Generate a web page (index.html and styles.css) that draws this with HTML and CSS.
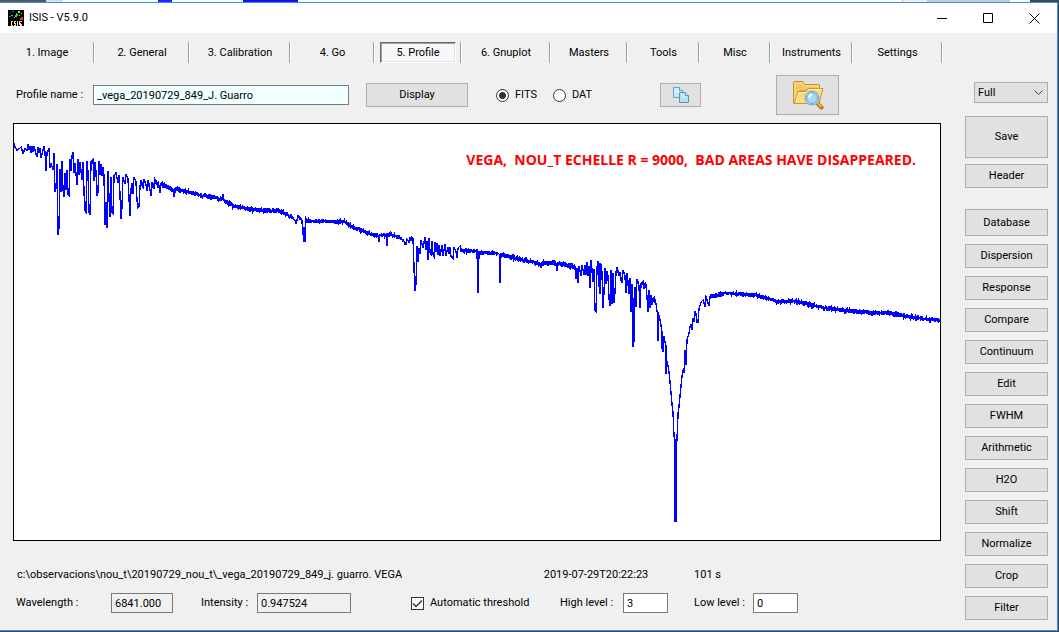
FILE: index.html
```html
<!DOCTYPE html>
<html lang="en">
<head>
    <meta charset="UTF-8">
    <meta name="viewport" content="width=device-width, initial-scale=1.0">
    <title>ISIS - V5.9.0</title>
    <link rel="stylesheet" href="styles.css">
</head>
<body>
    <div class="behind"></div>

    <div class="window">

        <header class="titlebar">
            <svg class="app-icon" viewBox="0 0 16 16" shape-rendering="crispEdges">
                <rect width="16" height="16" fill="#000"/>
                <path d="M2 2h1v1h-1zM4 1h2v1h-2zM1 6h2v1h-2z" fill="#2a62d8"/>
                <path d="M3 5h2v1h-2zM6 7h1v1h-1z" fill="#2fb6c8"/>
                <path d="M8 3h1v1h1v2h-1v1h-2v-2h1z" fill="#1fe05a"/>
                <path d="M10 1h2v2h-2z" fill="#b6e32a"/>
                <path d="M13 3h1v1h-1zM11 5h1v1h-1z" fill="#f4c430"/>
                <path d="M13 7h2v3h-3v-2h1z" fill="#f03018"/>
                <path d="M3 11h2v1h-1v3h1v1h-2v-1h0v-3h0zM6 11h2v1h-1v1h1v3h-2v-1h1v-1h-1zM9 11h1v5h-1zM11 11h3v1h-2v1h1v1h1v2h-2v-1h-1z" fill="#e8dca0"/>
            </svg>
            <span class="title">ISIS - V5.9.0</span>
            <button class="win-btn" aria-label="Minimize"><svg viewBox="0 0 11 11"><path d="M0 5.5h10"/></svg></button>
            <button class="win-btn" aria-label="Maximize"><svg viewBox="0 0 11 11"><path d="M.5.5h9v9h-9z"/></svg></button>
            <button class="win-btn" aria-label="Close"><svg viewBox="0 0 11 11"><path d="M.5.5l10 10M10.500.5l-10 10"/></svg></button>
        </header>

        <nav class="tabs">
            <div><button>1. Image</button></div>
            <div><button>2. General</button></div>
            <div><button>3. Calibration</button></div>
            <div><button>4. Go</button></div>
            <div><button class="active">5. Profile</button></div>
            <div><button>6. Gnuplot</button></div>
            <div><button>Masters</button></div>
            <div><button>Tools</button></div>
            <div><button>Misc</button></div>
            <div><button>Instruments</button></div>
            <div><button>Settings</button></div>
        </nav>

        <main class="content">
            <section class="profile">

                <div class="controls">
                    <label for="name">Profile name :</label>
                    <input type="text" id="name" class="name" value="_vega_20190729_849_J. Guarro">
                    <button class="btn display">Display</button>
                    <div class="format">
                        <label><input type="radio" name="format" checked>FITS</label>
                        <label><input type="radio" name="format">DAT</label>
                    </div>
                    <button class="btn copy" aria-label="Copy">
                        <svg width="16" height="16" viewBox="0 0 16 16">
                            <path d="M.5.5h6l3 3v7h-9z" fill="#c9e7f6" stroke="#62a5c7"/>
                            <path d="M6.500.5v3h3" fill="#fff" stroke="#62a5c7"/>
                            <path d="M2 3h3M2 5h5" stroke="#e9f7fd"/>
                            <path d="M6.500 5.500h6l3 3v7h-9z" fill="#b5def2" stroke="#4f98bd"/>
                            <path d="M12.500 5.500v3h3" fill="#fff" stroke="#4f98bd"/>
                            <path d="M8 8h3M8 10h5" stroke="#e3f5fd"/>
                        </svg>
                    </button>
                    <button class="btn browse" aria-label="Browse">
                        <svg width="32" height="32" viewBox="0 0 32 32">
                            <path d="M1.500 24V3.500q0-1 1-1h8l2 3h14q1 0 1 1V12H8L4 24z" fill="#f3c95d" stroke="#c98a2b"/>
                            <path d="M3 22V4h7l2 3h14v3" fill="none" stroke="#fbe39a"/>
                            <path d="M2 24.500L6 12.500h8l2-3h15l-4 15z" fill="#fbdc7c" stroke="#d2922d"/>
                            <path d="M4 23l3-9.500h8l2-3h12" fill="none" stroke="#fff0b8"/>
                            <path d="M25 24l4.500 4.500" stroke="#b5701c" stroke-width="4" stroke-linecap="round"/>
                            <path d="M26 24.500l3 3" stroke="#f8b244" stroke-width="2" stroke-linecap="round"/>
                            <circle cx="20" cy="19" r="6.500" fill="#a9daf8" stroke="#f4f8fb" stroke-width="2"/>
                            <circle cx="20" cy="19" r="7" fill="none" stroke="#6f8ea8"/>
                            <circle cx="20" cy="19" r="5.500" fill="none" stroke="#5d9fd3"/>
                            <path d="M17 19q0-3 3-3.500" fill="none" stroke="#fff" stroke-width="2"/>
                        </svg>
                    </button>
                </div>

                <div class="plot">
                    <svg viewBox="14 124 926 416" preserveAspectRatio="none">
                        <polyline id="spectrum" points=""/>
                    </svg>
                    <p class="caption">VEGA,  NOU_T ECHELLE R = 9000,  BAD AREAS HAVE DISAPPEARED.</p>
                </div>

                <div class="file-info">
                    <span>c:\observacions\nou_t\20190729_nou_t\_vega_20190729_849_j. guarro. VEGA</span>
                    <span>2019-07-29T20:22:23</span>
                    <span>101 s</span>
                </div>

                <div class="readout">
                    <label for="wavelength">Wavelength :</label>
                    <input type="text" id="wavelength" class="w-medium" value="6841.000" readonly>
                    <label for="intensity">Intensity :</label>
                    <input type="text" id="intensity" class="w-large" value="0.947524" readonly>
                    <label class="check"><input type="checkbox" checked>Automatic threshold</label>
                    <label for="high">High level :</label>
                    <input type="text" id="high" class="w-small" value="3">
                    <label for="low">Low level :</label>
                    <input type="text" id="low" class="w-small" value="0">
                </div>

            </section>

            <aside class="actions">
                <select aria-label="Zoom">
                    <option>Full</option>
                </select>
                <button class="btn save">Save</button>
                <button class="btn header">Header</button>
                <button class="btn database">Database</button>
                <button class="btn">Dispersion</button>
                <button class="btn">Response</button>
                <button class="btn">Compare</button>
                <button class="btn">Continuum</button>
                <button class="btn">Edit</button>
                <button class="btn">FWHM</button>
                <button class="btn">Arithmetic</button>
                <button class="btn">H2O</button>
                <button class="btn">Shift</button>
                <button class="btn">Normalize</button>
                <button class="btn">Crop</button>
                <button class="btn">Filter</button>
            </aside>
        </main>

    </div>

    <script src="script.js"></script>
</body>
</html>
```
FILE: styles.css
```css
* {
    box-sizing: border-box;
}

body {
    margin: 0;
    min-height: 100vh;
    display: flex;
    flex-direction: column;
    padding: 0 1px 1px 0;
    background-color: #454545;
    font-family: Roboto, "Liberation Sans", sans-serif;
    font-size: 11px;
    line-height: 16px;
    color: #000;
}

button,
input,
select {
    font: inherit;
    color: inherit;
    margin: 0;
}

button {
    padding: 0;
}

/* sliver of the window underneath */
.behind {
    height: 2px;
    background: linear-gradient(90deg, #555 0 46px, #ddd 46px 63px, #fff 63px 158px, #22f 158px 172px, #fff 172px 243px, #11e 243px 298px, #fff 298px 902px, #f0c040 902px 903px, #eee 903px 927px, #ccc 927px 1010px, #fff 1010px 1030px, #454545 1030px);
}

.window {
    flex: 1;
    display: flex;
    flex-direction: column;
    border: 1px solid #3390ee;
    border-left: 0;
    background-color: #f0f0f0;
}

.titlebar {
    height: 30px;
    display: flex;
    align-items: center;
    padding-left: 8px;
    background-color: #fff;
}

.app-icon {
    width: 16px;
    height: 16px;
}

.title {
    flex: 1;
    margin-left: 5px;
}

.win-btn {
    width: 46px;
    height: 28px;
    border: 0;
    background: none;
}

.win-btn svg {
    display: block;
    width: 11px;
    height: 11px;
    margin: 0 auto;
    fill: none;
    stroke: #000;
}

.tabs {
    display: grid;
    grid-template-columns: 95fr 95fr 101fr 84fr 87fr 89fr 77fr 72fr 71fr 82fr 90fr;
    padding: 9px 114px 0 0;
}

.tabs div {
    display: flex;
    justify-content: center;
    min-width: 0;
    height: 21px;
    border-right: 1px solid #fff;
    box-shadow: inset -1px 0 #a0a0a0;
}

.tabs button {
    border: 0;
    background: none;
    white-space: nowrap;
}

.tabs .active {
    width: 76px;
    border: 1px solid;
    border-color: #696969 #fff #fff #696969;
    box-shadow: inset 1px 1px #a0a0a0, inset -1px -1px #e3e3e3;
    background-color: #f8f8f8;
}

.content {
    flex: 1;
    display: grid;
    grid-template-columns: 1fr 83px;
    column-gap: 24px;
    padding: 12px 9px 10px 13px;
}

.profile {
    display: flex;
    flex-direction: column;
}

.controls {
    display: grid;
    grid-template-columns: 80fr 273fr 130fr 164fr 116fr 165fr;
    align-items: center;
    height: 40px;
    margin-bottom: 8px;
}

.controls > label,
.readout > label:first-child {
    padding-left: 3px;
}

input[type="text"] {
    height: 20px;
    padding: 0 3px;
    border: 1px solid #7a7a7a;
    border-radius: 0;
    background-color: #fff;
}

input[type="text"]:read-only {
    background-color: #f0f0f0;
}

input.name {
    width: 256px;
    background-color: #f0ffff;
}

.btn {
    height: 24px;
    border: 1px solid #adadad;
    background-color: #e1e1e1;
}

.btn:hover {
    border-color: #0078d7;
    background-color: #e5f1fb;
}

.btn svg {
    display: block;
    margin: 0 auto;
}

.display {
    width: 102px;
}

.copy {
    width: 41px;
}

.browse {
    width: 63px;
    height: 40px;
}

.format {
    display: flex;
    gap: 16px;
}

.format label,
.check {
    display: flex;
    align-items: center;
    gap: 6px;
}

input[type="radio"],
input[type="checkbox"] {
    appearance: none;
    width: 13px;
    height: 13px;
    border: 1px solid #333;
    background-color: #fff;
}

input[type="radio"] {
    border-radius: 50%;
}

input[type="radio"]:checked {
    background-image: radial-gradient(circle, #333 3px, transparent 4px);
}

input[type="checkbox"]:checked {
    background-image: url("data:image/svg+xml,%3Csvg xmlns='http://www.w3.org/2000/svg' viewBox='0 0 11 11'%3E%3Cpath d='M1 5.500l3 3L10 2.500' fill='none' stroke='%23333' stroke-width='1.300'/%3E%3C/svg%3E");
}

.plot {
    position: relative;
    flex: 1;
    min-height: 200px;
    border: 1px solid #000;
    background-color: #fff;
}

.plot svg {
    position: absolute;
    width: 100%;
    height: 100%;
}

#spectrum {
    fill: none;
    stroke: #00f;
    stroke-width: 1.4;
    vector-effect: non-scaling-stroke;
    shape-rendering: crispEdges;
}

.caption {
    position: absolute;
    top: 28px;
    right: 24px;
    margin: 0;
    color: #f00;
    font-family: "Open Sans", sans-serif;
    font-size: 14px;
    font-weight: bold;
    white-space: pre;
}

.file-info {
    display: grid;
    grid-template-columns: 529fr 151fr 248fr;
    padding-left: 4px;
    margin: 26px 0 10px;
    white-space: nowrap;
}

.readout {
    display: grid;
    grid-template-columns: 98fr 90fr 56fr 154fr 149fr 63fr 71fr 59fr 188fr;
    align-items: center;
    margin-bottom: 7px;
    white-space: nowrap;
}

.w-small {
    width: 45px;
}

.w-medium {
    width: 62px;
}

.w-large {
    width: 94px;
}

.actions {
    display: flex;
    flex-direction: column;
    gap: 8px;
    padding-top: 7px;
}

.actions select {
    width: 74px;
    height: 21px;
    margin-bottom: 5px;
    padding: 0 3px;
    align-self: flex-end;
    appearance: none;
    border: 1px solid #adadad;
    border-radius: 0;
    background: #e1e1e1 url("data:image/svg+xml,%3Csvg xmlns='http://www.w3.org/2000/svg' width='9' height='6'%3E%3Cpath d='M.5.5l4 4 4-4' fill='none' stroke='%23444'/%3E%3C/svg%3E") no-repeat right 4px center;
}

.actions .save {
    height: 42px;
}

.actions .header {
    margin: -2px 0 13px;
}

.actions .database {
    height: 27px;
}
```
FILE: script.js
```js
// x, y, noise between this point and the next one (0 = straight line)
const spectrum = [
    [14,143,0],[15,147,0],[17,150,0],[19,149,0],[21,147,0],[23,153,0],[25,149,0],[27,150,0],
    [28,144,0],[29,150,0],[30,146,0],[31,153,0],[32,146,0],[33,152,0],[34,146,0],[36,154,0],
    [37,157,0],[38,147,0],[39,153,0],[40,148,0],[41,158,0],[43,150,0],[44,147,0],[45,152,0],
    [46,171,0],[47,153,0],[49,148,0],[50,168,0],[51,163,0],[53,170,0],[54,153,0],[55,192,0],
    [56,188,0],[57,164,0],[58,235,0],[59,228,0],[60,169,0],[61,192,0],[62,161,0],[63,190,0],
    [64,197,0],[65,173,0],[66,190,0],[67,170,0],[68,195,0],[69,196,0],[70,159,0],[71,171,0],
    [72,156,0],[73,152,0],[74,173,0],[75,163,0],[76,174,0],[77,185,0],[78,159,0],[79,175,0],
    [80,162,0],[82,180,0],[83,162,0],[84,192,0],[85,211,0],[86,212,0],[87,161,0],[88,172,0],
    [89,212,0],[90,215,0],[91,161,0],[93,159,0],[94,181,0],[95,162,0],[96,172,0],[97,196,0],
    [98,192,0],[99,161,0],[100,175,0],[101,164,0],[102,176,0],[103,167,0],[104,176,0],[105,225,0],
    [106,202,0],[107,228,0],[108,171,0],[109,198,0],[110,217,0],[111,177,0],[112,213,0],[113,214,0],
    [114,176,0],[116,173,0],[118,183,0],[119,175,0],[120,195,0],[121,219,0],[122,207,0],[123,177,0],
    [125,184,0],[126,174,0],[128,179,0],[129,198,0],[130,216,0],[131,189,0],[132,183,0],[133,194,0],
    [134,177,0],[136,182,0],[137,200,0],[138,208,0],[139,207,0],[140,186,0],[141,180,2],[143,187,0],
    [144,179,0],[146,185,0],[147,191,0],[148,180,2],[150,190,0],[151,196,0],[152,183,2],[154,188,0],
    [155,179,2],[157,184,2],[159,186,0],[160,193,0],[161,184,2],[173,190,0],[174,197,0],[175,189,2],
    [200,195,2],[222,199,0],[223,194,0],[224,200,2],[234,206,1.5],[254,210,2],[280,211,1.5],[288,215,1],
    [294,219,0],[295,220,0],[296,224,0],[298,216,1],[301,219,0],[302,221,0],[303,235,0],[304,227,0],
    [304,241,0],[305,241,0],[306,219,0],[307,221,1.5],[345,222,1.5],[352,227,2],[362,231,1.5],[370,234,1.5],
    [378,236,0],[379,242,0],[380,235,1.5],[386,235,0],[387,246,0],[388,234,1],[396,236,1],[402,239,1],
    [406,244,0],[407,239,0],[409,242,0],[410,237,0],[411,241,0],[412,237,0],[413,238,0],[414,268,0],
    [415,291,0],[416,284,0],[417,246,0],[418,262,0],[419,248,0],[420,254,0],[421,240,0],[423,248,0],
    [425,237,0],[426,250,0],[427,241,0],[428,260,0],[429,238,0],[430,252,0],[431,254,0],[432,241,0],
    [433,254,0],[434,256,0],[435,242,0],[436,252,0],[437,243,0],[438,255,0],[439,245,0],[440,256,0],
    [442,245,0],[443,256,0],[445,244,0],[446,256,0],[448,247,0],[449,254,0],[450,247,0],[451,257,0],
    [453,259,0],[454,247,0],[456,252,0],[457,258,0],[458,248,0],[460,246,0],[461,251,2],[475,251,0],
    [477,250,0],[478,293,0],[479,251,0],[480,253,1.5],[498,253,0],[500,255,0],[500,283,0],[501,253,0],
    [502,255,2],[515,258,1.5],[540,264,0],[541,267,0],[542,263,2],[556,263,0],[557,271,0],[558,263,1],
    [575,267,0],[576,279,0],[577,268,0],[578,283,0],[579,266,0],[581,276,0],[582,265,0],[584,275,0],
    [585,265,0],[586,275,0],[587,262,0],[588,276,0],[589,266,0],[590,288,0],[591,260,0],[592,270,0],
    [593,282,0],[594,269,0],[595,311,0],[596,312,0],[597,267,0],[598,261,0],[599,287,0],[600,263,0],
    [600,294,0],[601,264,0],[602,272,0],[603,308,0],[604,292,0],[605,268,0],[606,284,0],[607,271,0],
    [608,276,0],[609,298,0],[610,306,0],[611,270,0],[612,304,0],[613,273,0],[614,303,0],[615,292,0],
    [616,272,0],[617,268,2],[619,275,0],[620,273,2],[622,283,0],[623,270,2],[625,276,0],[626,293,0],
    [627,273,2],[629,294,0],[630,278,0],[631,312,0],[632,284,0],[633,347,0],[634,298,0],[634,342,0],
    [635,287,0],[636,307,0],[637,279,2],[639,286,0],[640,308,0],[641,284,0],[642,283,2],[646,286,0],
    [647,297,0],[648,312,0],[649,290,0],[650,308,0],[651,295,0],[652,305,0],[653,299,2],[656,303,0],
    [657,311,0],[658,313,0],[658,341,0],[659,315,0],[660,320,0],[661,325,0],[662,332,0],[662,348,0],
    [663,352,0],[664,336,0],[665,342,0],[666,346,0],[666,374,0],[667,361,0],[668,366,0],[669,372,0],
    [670,382,0],[672,404,0],[673,412,0],[674,436,0],[675,440,0],[675,521,0],[676,521,0],[676,442,0],
    [677,440,0],[678,414,0],[679,406,0],[680,396,0],[682,376,0],[683,370,0],[684,373,0],[685,350,0],
    [686,365,0],[687,340,0],[689,333,0],[690,327,0],[691,325,0],[692,330,0],[693,318,0],[694,322,0],
    [695,311,0],[696,314,0],[697,322,0],[698,322,0],[699,309,0],[701,302,0],[703,300,0],[704,303,0],
    [705,307,0],[706,297,2],[708,303,0],[709,306,0],[710,297,2],[718,295,2],[724,293,1.5],[735,294,2],
    [755,295,1.5],[770,299,1.5],[780,302,1.5],[794,301,1.5],[815,306,1.5],[833,309,1.5],[848,311,2],
    [873,313,2],[890,313,2],[905,316,1.5],[925,319,1.5],[940,320,0]
];

let seed = 7;

function random() {
    seed = (seed * 16807) % 2147483647;
    return seed / 2147483647;
}

function buildPoints(data) {
    const points = [];
    for (let i = 0; i < data.length; i++) {
        const [x, y, noise] = data[i];
        points.push(x + ',' + y);
        if (!noise) continue;

        const next = data[i + 1];
        for (let px = x + 1; px < next[0]; px++) {
            // every column gets its own short vertical stroke
            const base = y + (next[1] - y) * (px - x) / (next[0] - x);
            const top = base - noise * (0.2 + random() * 1.1);
            const bottom = base + noise * (0.2 + random() * 1.1);
            points.push(px + ',' + top.toFixed(1), px + ',' + bottom.toFixed(1));
        }
    }
    return points.join(' ');
}

document.getElementById('spectrum').setAttribute('points', buildPoints(spectrum));
```
